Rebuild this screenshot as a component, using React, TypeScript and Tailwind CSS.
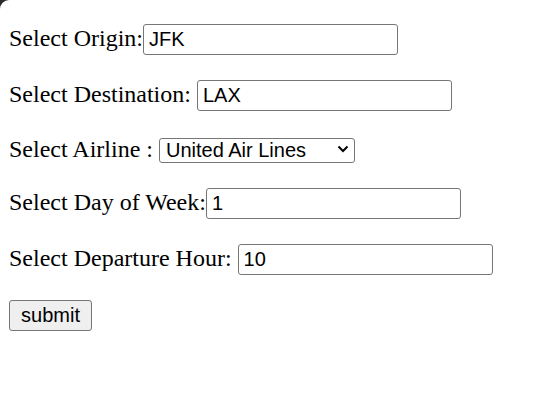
import React from "react";

const serif = { fontFamily: '"Liberation Serif", "Times New Roman", serif' };

export default function App() {
  const inputCls =
    "h-[31px] w-[255px] border border-[#767676] rounded-[3px] px-[5px] text-[20px] leading-[normal] text-black bg-white outline-none font-['Liberation_Sans',Arial,sans-serif]";
  return (
    <div className="w-[538px] h-[403px] bg-[#2b2b2b]">
      <div
        className="w-full h-full bg-white rounded-tl-[9px] pl-[9px] pt-[24px] flex flex-col gap-[25px] text-[24px] leading-[normal] text-black font-['Liberation_Serif','Times_New_Roman',serif]"
        style={serif}
      >
        <div className="flex items-baseline">
          <span className="whitespace-pre">Select Origin:</span>
          <input className={inputCls} defaultValue="JFK" />
        </div>
        <div className="flex items-baseline">
          <span className="whitespace-pre">Select Destination: </span>
          <input className={inputCls} defaultValue="LAX" />
        </div>
        <div className="flex items-baseline">
          <span className="whitespace-pre">Select Airline : </span>
          <div className="relative">
            <select
              className="appearance-none h-[25px] w-[196px] border border-[#767676] rounded-[3px] pl-[6px] text-[20px] leading-[normal] text-black bg-white outline-none font-['Liberation_Sans',Arial,sans-serif]"
              defaultValue="United Air Lines"
            >
              <option>United Air Lines</option>
              <option>American Airlines</option>
              <option>Delta Air Lines</option>
            </select>
            <svg
              className="absolute right-[6px] top-[9px] pointer-events-none"
              width="12"
              height="8"
              viewBox="0 0 12 8"
            >
              <path d="M1.5 1.5 L6 6 L10.5 1.5" fill="none" stroke="#000" strokeWidth="2" />
            </svg>
          </div>
        </div>
        <div className="flex items-baseline">
          <span className="whitespace-pre">Select Day of Week:</span>
          <input className={inputCls} defaultValue="1" />
        </div>
        <div className="flex items-baseline">
          <span className="whitespace-pre">Select Departure Hour: </span>
          <input className={inputCls} defaultValue="10" />
        </div>
        <div className="leading-none">
          <button className="h-[31px] w-[83px] border border-[#767676] rounded-[3px] bg-[#efefef] text-[20px] leading-[normal] text-black font-['Liberation_Sans',Arial,sans-serif]">
            submit
          </button>
        </div>
      </div>
    </div>
  );
}
